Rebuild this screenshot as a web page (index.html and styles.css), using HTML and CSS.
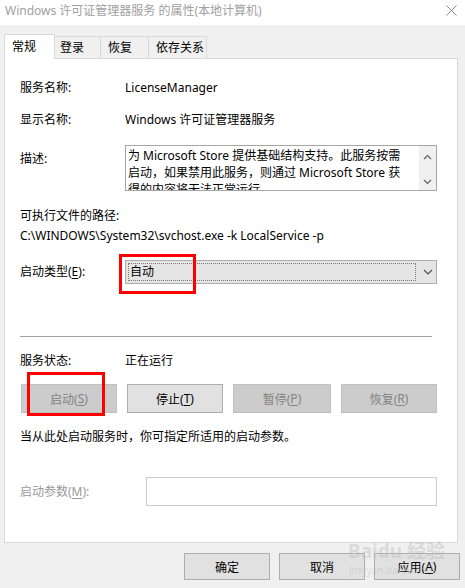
FILE: index.html
```html
<!DOCTYPE html>
<html lang="zh-CN">
<head>
<meta charset="UTF-8">
<title>Windows 许可证管理器服务 的属性(本地计算机)</title>
<link rel="stylesheet" href="styles.css">
</head>
<body>
<div class="titlebar">
  <span class="title">Windows 许可证管理器服务 的属性(本地计算机)</span>
  <svg class="close" width="11" height="11" viewBox="0 0 11 11">
    <path d="M0.5 0.5 L10.5 10.5 M10.5 0.5 L0.5 10.5" stroke="#8a8a8a" stroke-width="1" fill="none"/>
  </svg>
</div>

<div class="tabs">
  <div class="tab active">常规</div>
  <div class="tab t2">登录</div>
  <div class="tab t3">恢复</div>
  <div class="tab t4">依存关系</div>
</div>

<div class="panel">
  <div class="row r-name">
    <span>服务名称:</span>
    <span>LicenseManager</span>
  </div>
  <div class="row r-display">
    <span>显示名称:</span>
    <span>Windows 许可证管理器服务</span>
  </div>
  <div class="row r-desc">
    <span class="desc-label">描述:</span>
    <div class="desc-box">
      <div class="desc-text">
        <span>为 Microsoft Store 提供基础结构支持。此服务按需</span>
        <span>启动，如果禁用此服务，则通过 Microsoft Store 获</span>
        <span>得的内容将无法正常运行。</span>
      </div>
      <div class="scroll">
        <svg width="9" height="6" viewBox="0 0 9 6"><path d="M1 5 L4.5 1.5 L8 5" stroke="#606060" stroke-width="1.2" fill="none"/></svg>
        <svg width="9" height="6" viewBox="0 0 9 6"><path d="M1 1 L4.5 4.5 L8 1" stroke="#606060" stroke-width="1.2" fill="none"/></svg>
      </div>
    </div>
  </div>
  <div class="path-label">可执行文件的路径:</div>
  <div class="path">C:\WINDOWS\System32\svchost.exe -k LocalService -p</div>
  <div class="row r-type">
    <span>启动类型(<u>E</u>):</span>
    <div class="combo">
      <div class="combo-focus">自动</div>
      <svg class="combo-arrow" width="10" height="6" viewBox="0 0 10 6"><path d="M1 1 L5 5 L9 1" stroke="#505050" stroke-width="1.2" fill="none"/></svg>
      <div class="mark mark-type"></div>
    </div>
  </div>

  <div class="divider"></div>

  <div class="row r-status">
    <span>服务状态:</span>
    <span>正在运行</span>
  </div>
  <div class="actions">
    <div class="btn disabled">启动(<u>S</u>)<div class="mark mark-start"></div></div>
    <div class="btn">停止(<u>T</u>)</div>
    <div class="btn disabled wide">暂停(<u>P</u>)</div>
    <div class="btn disabled">恢复(<u>R</u>)</div>
  </div>
  <div class="hint">当从此处启动服务时，你可指定所适用的启动参数。</div>
  <div class="row r-params">
    <span class="muted">启动参数(<u>M</u>):</span>
    <div class="params-input"></div>
  </div>
</div>

<div class="footer">
  <div class="btn foot">确定</div>
  <div class="btn foot">取消</div>
  <div class="btn foot">应用(<u>A</u>)</div>
</div>

<div class="watermark">
  <span class="wm-big">Baidu 经验</span>
  <span class="wm-small">jingyan.baidu.com</span>
</div>
</body>
</html>
```

FILE: styles.css
```css
body {
  margin: 0;
  width: 465px;
  height: 588px;
  overflow: hidden;
  position: relative;
  background: #f0f0f0;
  font-family: "Noto Sans", "Noto Sans CJK SC", sans-serif;
  font-size: 12px;
  color: #000;
}
u {
  text-decoration: underline;
  text-underline-offset: 2px;
}
.titlebar {
  height: 25px;
  background: #fff;
  display: flex;
  align-items: center;
  justify-content: space-between;
  padding: 0 8px 0 5px;
}
.title {
  color: #a0a0a0;
  line-height: 17px;
  margin-top: -4px;
}
.close {
  margin-top: -4px;
}
.tabs {
  display: flex;
  align-items: flex-end;
  margin: 9px 0 0 4px;
  height: 24px;
  position: relative;
  z-index: 1;
}
.tab {
  height: 22px;
  box-sizing: border-box;
  border: 1px solid #d9d9d9;
  border-bottom: none;
  border-left: none;
  background: #f0f0f0;
  line-height: 22px;
  padding-left: 5px;
}
.tab.active {
  height: 25px;
  margin-bottom: -1px;
  width: 51px;
  background: #fff;
  border-left: 1px solid #d9d9d9;
  padding-left: 7px;
  line-height: 24px;
}
.t2 { width: 46px; }
.t3 { width: 48px; padding-left: 7px; }
.t4 { width: 58px; padding-left: 7px; }
.panel {
  margin: 0 7px 0 4px;
  height: 485px;
  box-sizing: border-box;
  border: 1px solid #d9d9d9;
  background: #fff;
  padding: 0 20px 0 15px;
}
.row {
  display: grid;
  grid-template-columns: 105px 1fr;
  line-height: 17px;
}
.r-name { margin-top: 20px; }
.r-display { margin-top: 15px; }
.r-desc { margin-top: 17px; }
.desc-label {
  padding-top: 5px;
}
.desc-box {
  height: 46px;
  box-sizing: border-box;
  border: 1px solid #a6a6a6;
  display: flex;
  overflow: hidden;
}
.desc-text {
  flex: 1;
  min-width: 0;
  padding: 1px 0 0 2px;
  overflow: hidden;
}
.desc-text span {
  display: block;
  white-space: nowrap;
}
.scroll {
  flex: none;
  width: 17px;
  background: #f0f0f0;
  display: flex;
  flex-direction: column;
  align-items: center;
  justify-content: space-between;
  padding: 8px 0 5px;
}
.path-label {
  margin-top: 15px;
  line-height: 20px;
}
.path {
  line-height: 20px;
}
.r-type {
  margin-top: 14px;
  line-height: 24px;
}
.combo {
  position: relative;
  height: 24px;
  box-sizing: border-box;
  border: 1px solid #adadad;
  background: #e5e5e5;
  display: flex;
  align-items: center;
}
.combo-focus {
  margin-left: 2px;
  width: 288px;
  height: 18px;
  box-sizing: border-box;
  border: 1px dotted #7a7a7a;
  line-height: 16px;
  padding-left: 1px;
}
.combo-arrow {
  margin-left: 7px;
}
.mark {
  position: absolute;
  border: 3px solid #f00;
  box-sizing: border-box;
}
.mark-type {
  left: -7px;
  top: -7px;
  width: 77px;
  height: 40px;
}
.divider {
  margin: 52px 5px 0 0;
  height: 1px;
  background: #a0a0a0;
}
.r-status { margin-top: 15px; }
.actions {
  margin-top: 15px;
  padding-left: 1px;
  display: flex;
  justify-content: space-between;
}
.btn {
  position: relative;
  width: 96px;
  height: 29px;
  box-sizing: border-box;
  border: 1px solid #adadad;
  background: #e1e1e1;
  display: flex;
  align-items: center;
  justify-content: center;
}
.btn.wide { width: 98px; }
.btn.disabled {
  background: #cccccc;
  border-color: #bfbfbf;
  color: #838383;
}
.mark-start {
  left: 5px;
  top: -13px;
  width: 78px;
  height: 44px;
}
.hint {
  margin-top: 15px;
  line-height: 17px;
}
.r-params {
  margin-top: 32px;
  grid-template-columns: 126px 1fr;
  line-height: 29px;
}
.muted {
  color: #999;
}
.params-input {
  height: 29px;
  box-sizing: border-box;
  border: 1px solid #cccccc;
  background: #fff;
}
.footer {
  display: flex;
  justify-content: flex-end;
  gap: 9px;
  margin: 10px 5px 0 0;
}
.btn.foot {
  width: 86px;
  height: 27px;
}
.watermark {
  position: absolute;
  left: 348px;
  top: 540px;
  color: rgba(190, 190, 190, 0.45);
  display: flex;
  flex-direction: column;
  white-space: nowrap;
  pointer-events: none;
}
.wm-big {
  font-size: 19px;
  font-weight: bold;
  line-height: 22px;
}
.wm-small {
  font-size: 10px;
  line-height: 12px;
  margin: 2px 0 0 1px;
}
```
